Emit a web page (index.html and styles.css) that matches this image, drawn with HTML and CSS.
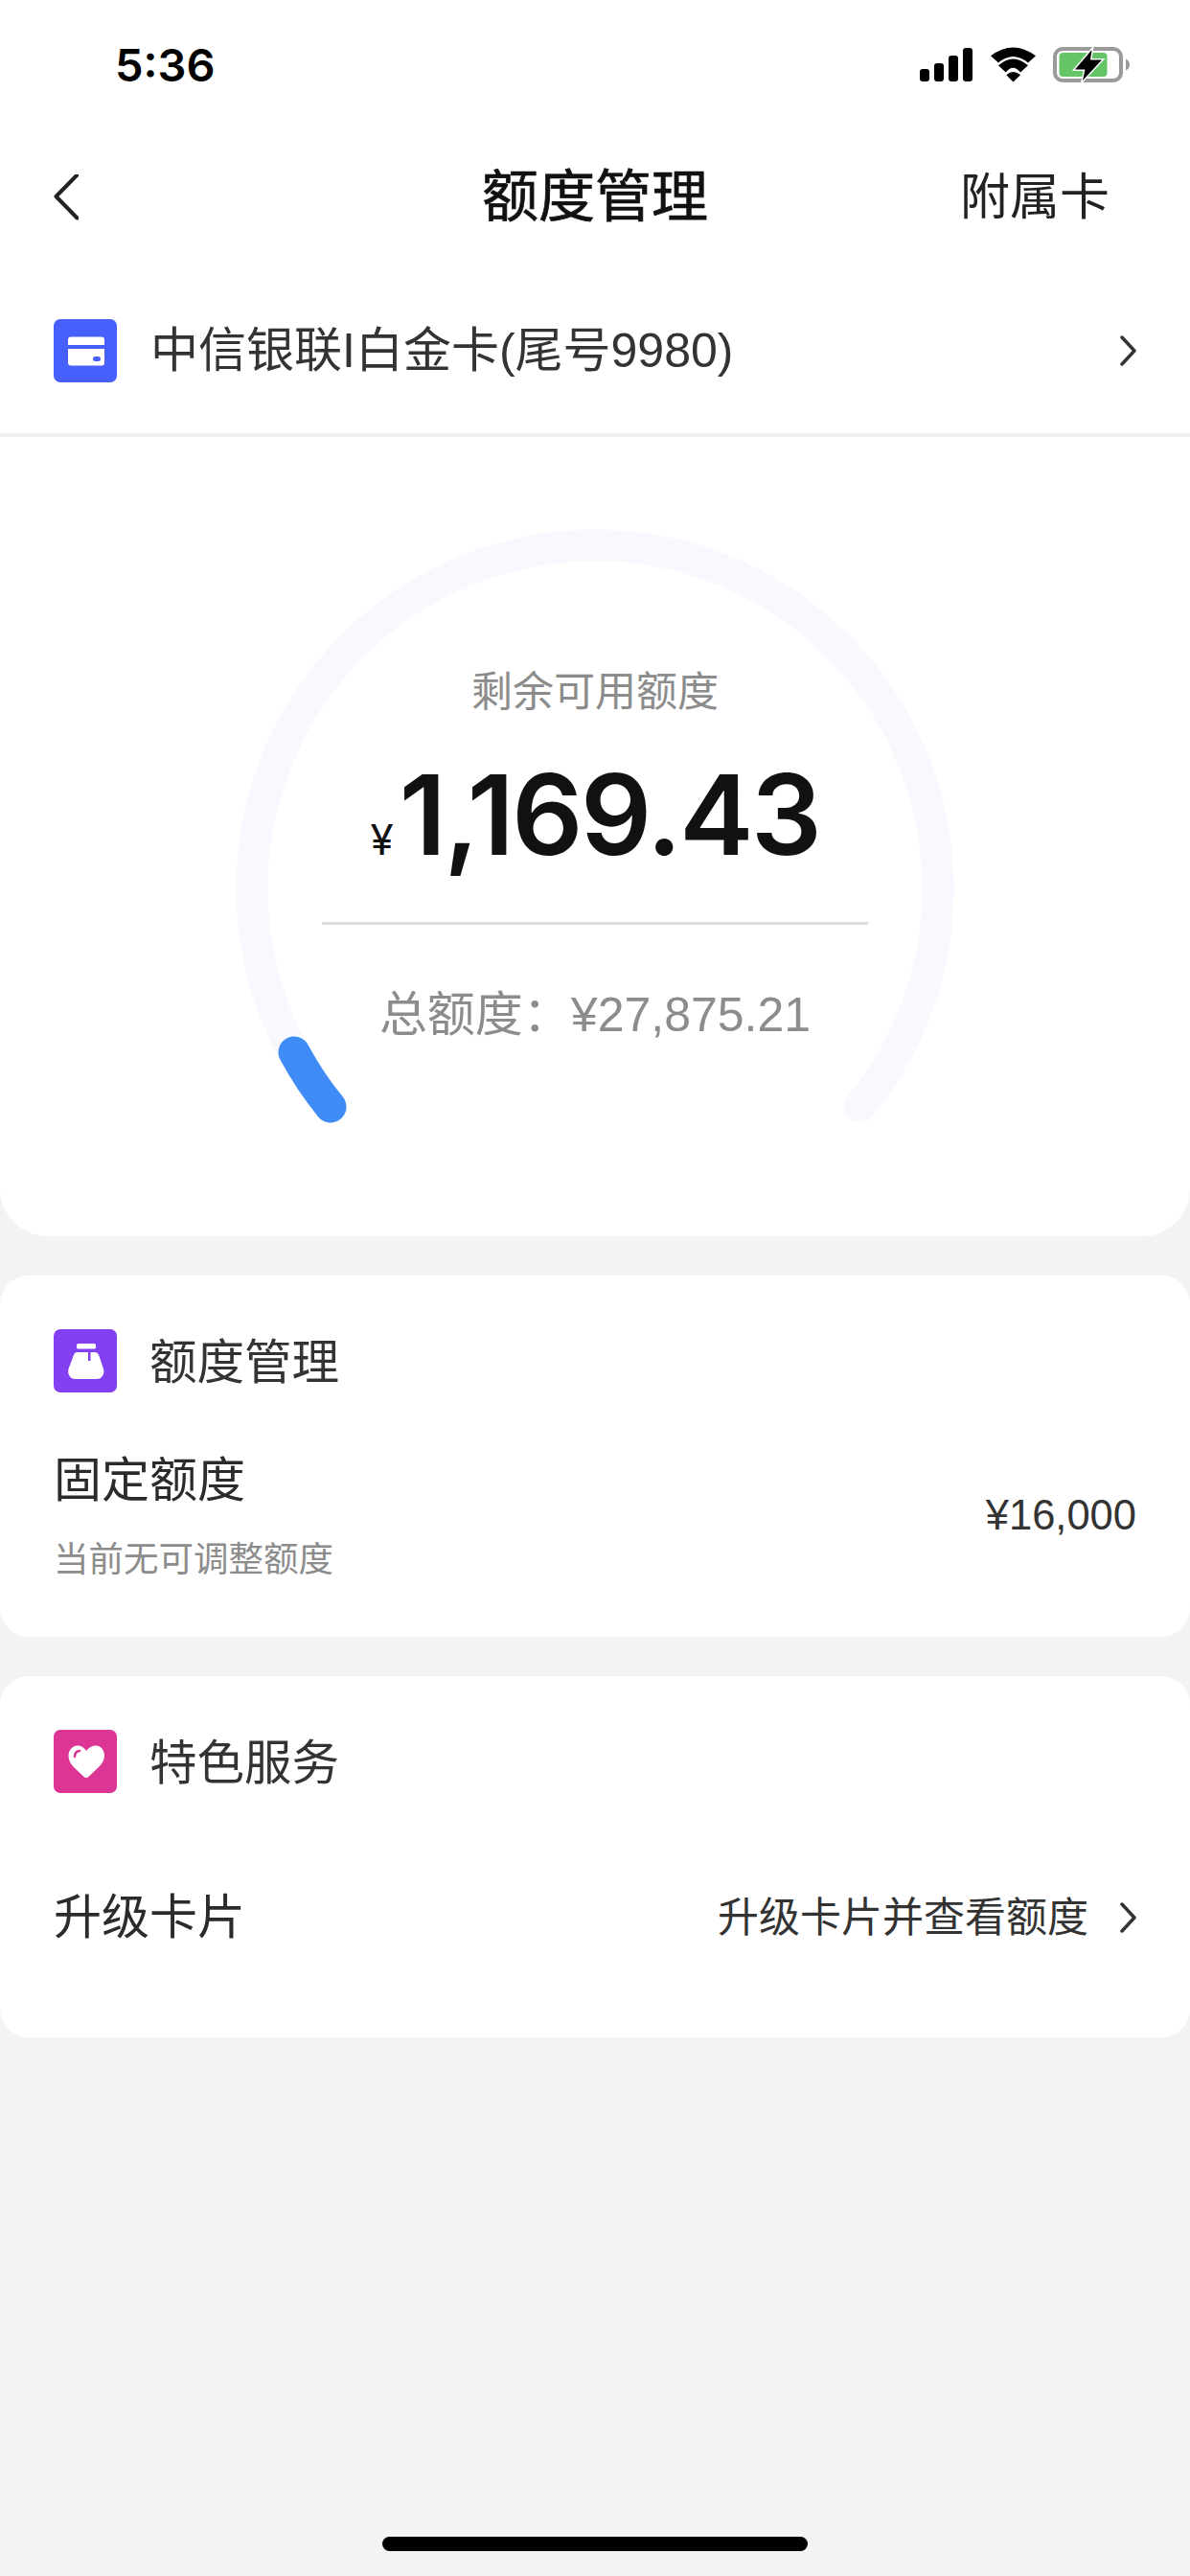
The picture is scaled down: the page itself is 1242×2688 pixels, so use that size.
FILE: index.html
```html
<!DOCTYPE html>
<html lang="zh-CN">
<head>
<meta charset="utf-8">
<title>额度管理</title>
<link rel="stylesheet" href="styles.css">
</head>
<body>
<div class="page">
  <div class="top">
    <div class="status">
      <span class="time">5:36</span>
      <svg class="status-icons" width="220" height="40" viewBox="0 0 220 40">
        <rect x="0" y="24" width="10" height="13" rx="3"/>
        <rect x="15" y="18" width="10" height="19" rx="3"/>
        <rect x="30" y="10" width="10" height="27" rx="3"/>
        <rect x="45" y="2" width="10" height="35" rx="3"/>
        <path d="M74 10.3Q97.3-7.5 121 10.3L113 17.5Q97.3 4.5 82 17.5Z"/>
        <path d="M82 20.3Q97.3 6.5 113 20.3L105 27.5Q97.3 18 89.7 27.5Z"/>
        <path d="M90.3 30.3Q97.3 23.5 105 30.3L97.5 37.5Z"/>
        <rect class="batt-shell" x="141" y="3" width="69" height="33" rx="8"/>
        <rect class="batt-fill" x="145.5" y="7" width="50" height="25" rx="4"/>
        <path class="batt-cap" d="M215 13.5C218 15 219 17 219 19.5C219 22 218 24 215 25.5Z"/>
        <path class="batt-bolt" d="M179.5 4L162 24.5H172.5L170 36L190 14.5H178Z"/>
      </svg>
    </div>
    <div class="nav">
      <svg class="nav-back" width="26" height="48" viewBox="0 0 26 48"><path d="M24.5 0.5L2.5 23L24.5 45.5"/></svg>
      <span class="nav-title">额度管理</span>
      <span class="nav-action">附属卡</span>
    </div>
    <div class="card-row">
      <svg class="icon" width="66" height="66" viewBox="0 0 66 66">
        <rect width="66" height="66" rx="7" fill="#4760fb"/>
        <path fill="#fff" d="M18 18.5H50A3 3 0 0 1 53 21.5V27H15V21.5A3 3 0 0 1 18 18.5ZM15 31H53V45.5A3 3 0 0 1 50 48.5H18A3 3 0 0 1 15 45.5Z"/>
        <rect x="41" y="39" width="8" height="5" rx="2.5" fill="#4760fb"/>
      </svg>
      <span class="card-name">中信银联I白金卡(尾号9980)</span>
      <svg class="chev" width="20" height="32" viewBox="0 0 20 32"><path d="M5 2L18 16L5 30"/></svg>
    </div>
  </div>

  <section class="gauge">
    <svg class="gauge-ring" width="1242" height="834" viewBox="0 0 1242 834">
      <path class="ring-track" d="M345 699A358 358 0 1 1 897 699"/>
      <path class="ring-value" d="M345 699A358 358 0 0 1 307 642"/>
    </svg>
    <div class="gauge-label">剩余可用额度</div>
    <div class="gauge-amount"><span class="yen">¥</span>1,169.43</div>
    <div class="gauge-rule"></div>
    <div class="gauge-total">总额度：¥27,875.21</div>
  </section>

  <section class="panel panel-limit">
    <div class="panel-head">
      <svg class="icon" width="66" height="66" viewBox="0 0 66 66">
        <rect width="66" height="66" rx="7" fill="#8340f2"/>
        <rect x="24" y="15" width="20" height="5.5" rx="1.5" fill="#fff"/>
        <path fill="#fff" d="M25 24H36V33H38.5V24H43C45.5 24 46.5 25.5 47.5 28L52 41.5C53.5 47 50 52 45 52H22.5C17.5 52 14 47 15.5 41.5L20.5 28C21.5 25.5 22.5 24 25 24Z"/>
      </svg>
      <span class="panel-title">额度管理</span>
    </div>
    <div class="limit-row">
      <div class="limit-info">
        <div class="row-label">固定额度</div>
        <div class="row-sub">当前无可调整额度</div>
      </div>
      <span class="limit-value">¥16,000</span>
    </div>
  </section>

  <section class="panel panel-service">
    <div class="panel-head">
      <svg class="icon" width="66" height="66" viewBox="0 0 66 66">
        <rect width="66" height="66" rx="7" fill="#dd3595"/>
        <path fill="#fff" d="M34 22C37 18 41 16.5 44 16.5C49 16.5 53 21 53 27C53 31 51 35 47 39L37 48.5C35 50.5 33 50.5 31 48.5L21 39C17 35 15.5 31 15.5 27C15.5 21 20 16.5 25 16.5C28 16.5 31.5 18 34 22Z"/>
        <path fill="none" stroke="#dd3595" stroke-width="2.5" stroke-linecap="round" d="M22 28C22 25 24 22.5 27 22"/>
      </svg>
      <span class="panel-title">特色服务</span>
    </div>
    <div class="service-row">
      <span class="row-label">升级卡片</span>
      <span class="service-link">升级卡片并查看额度</span>
      <svg class="chev" width="20" height="32" viewBox="0 0 20 32"><path d="M5 2L18 16L5 30"/></svg>
    </div>
  </section>

  <div class="home-bar"></div>
</div>
</body>
</html>
```
FILE: styles.css
```css
* { box-sizing: border-box; }
html, body { margin: 0; padding: 0; }
body {
  font-family: "Liberation Sans", "Noto Sans CJK SC", sans-serif;
  background: #f3f3f3;
  color: #222;
}
.page {
  width: 1242px;
  height: 2688px;
  display: flex;
  flex-direction: column;
  overflow: hidden;
}
.top { background: #fff; }
.status {
  height: 136px;
  display: flex;
  align-items: center;
  justify-content: space-between;
  padding: 0 62px 0 120px;
}
.time {
  font: 600 47px/60px Inter, "Liberation Sans", sans-serif;
  color: #000;
}
.status-icons { fill: #000; }
.batt-shell { fill: none; stroke: #9a9a9a; stroke-width: 4; }
.batt-fill { fill: #65c466; }
.batt-cap { fill: #9a9a9a; }
.batt-bolt { fill: #000; stroke: #fff; stroke-width: 3; paint-order: stroke; }
.nav {
  height: 140px;
  display: flex;
  align-items: center;
  justify-content: space-between;
  padding: 0 84px 0 56px;
  position: relative;
}
.nav-back { fill: none; stroke: #222; stroke-width: 4; stroke-linecap: round; stroke-linejoin: round; }
.nav-title {
  position: absolute;
  left: 0;
  right: 0;
  text-align: center;
  font-size: 59px;
  line-height: 80px;
  font-weight: 400;
  -webkit-text-stroke: 0.7px #111;
  color: #111;
}
.nav-action { font-size: 52px; line-height: 80px; color: #222; }
.card-row {
  height: 180px;
  display: flex;
  align-items: center;
  padding: 3px 56px 0;
  border-bottom: 4px solid #f0f0f0;
}
.icon { flex: none; }
.card-name { flex: 1; margin-left: 35px; font-size: 50px; line-height: 60px; color: #333; }
.chev { fill: none; stroke: #333; stroke-width: 3.5; stroke-linecap: round; stroke-linejoin: round; flex: none; }

.gauge {
  position: relative;
  height: 834px;
  background: #fff;
  border-radius: 0 0 50px 50px;
  padding-top: 236px;
  text-align: center;
}
.gauge-ring { position: absolute; left: 0; top: 0; fill: none; stroke-width: 33; stroke-linecap: round; }
.ring-track { stroke: #f8f9fe; }
.ring-value { stroke: #3f8cf7; }
.gauge-label, .gauge-amount, .gauge-rule, .gauge-total { position: relative; }
.gauge-label { font-size: 43px; line-height: 60px; color: #8c8c8c; }
.gauge-amount {
  margin-top: 28px;
  font-family: Inter, "Liberation Sans", sans-serif;
  font-size: 116px;
  line-height: 140px;
  font-weight: 600;
  letter-spacing: -2.4px;
  color: #111;
}
.yen { font-size: 44px; line-height: 0; font-weight: 400; letter-spacing: 0; margin-right: 6px; }
.gauge-rule { width: 570px; height: 3px; margin: 42px auto 0; background: #ddd; }
.gauge-total { margin-top: 64px; font-size: 50px; line-height: 60px; color: #8c8c8c; }

.panel { background: #fff; border-radius: 30px; padding: 56px 56px 0; }
.panel-limit { margin-top: 41px; height: 377px; }
.panel-service { margin-top: 41px; height: 377px; }
.panel-head { display: flex; align-items: center; }
.panel-title { margin-left: 34px; padding-top: 3px; font-size: 49.5px; line-height: 60px; color: #333; }
.limit-row { margin-top: 62px; display: flex; align-items: center; justify-content: space-between; }
.row-label { font-size: 50px; line-height: 60px; color: #2b2b2b; }
.row-sub { margin-top: 28px; font-size: 36.5px; line-height: 50px; color: #8c8c8c; }
.limit-value { font-size: 43.5px; line-height: 60px; color: #333; margin-bottom: 6px; }
.service-row { margin-top: 100px; display: flex; align-items: center; }
.service-row .row-label { flex: 1; }
.service-link { font-size: 43px; line-height: 60px; color: #333; margin-right: 30px; }
.home-bar {
  margin: auto auto 26px;
  width: 444px;
  height: 15px;
  border-radius: 8px;
  background: #000;
}
```
